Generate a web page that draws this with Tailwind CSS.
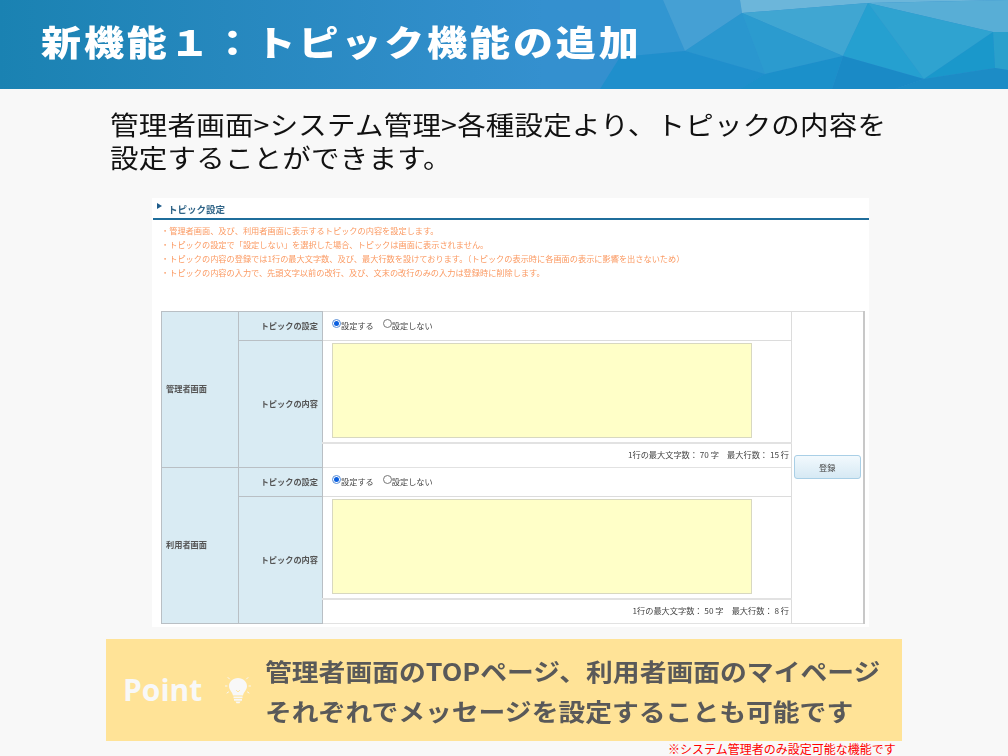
<!DOCTYPE html>
<html lang="ja">
<head>
  <meta charset="UTF-8" />
  <script src="https://cdn.jsdelivr.net/npm/@tailwindcss/browser@4"></script>
  <title>新機能1</title>
</head>
<body class="bg-[#f8f8f8] font-['Noto_Sans_CJK_JP','Noto_Sans',sans-serif]">
  <div class="w-[1008px] h-[756px] overflow-hidden flex flex-col">
    <!-- Header -->
    <header class="relative h-[89px] shrink-0 bg-gradient-to-r from-[#1a82b2] to-[#3490cf] to-[54%] pl-[41px] pt-[14px]">
      <svg class="absolute inset-0" width="1008" height="89" viewBox="0 0 1008 89" aria-hidden="true">
        <polygon points="620,0 663,0 685,51 620,57" fill="#3196d1"/>
        <polygon points="663,0 740,0 742,13 685,51" fill="#45a0d4"/>
        <polygon points="740,0 1008,0 868,3 742,13" fill="#6cb6da"/>
        <polygon points="868,3 1008,0 1008,32 993,32" fill="#58aed6"/>
        <polygon points="742,13 868,3 843,56" fill="#40a6d2"/>
        <polygon points="742,13 685,51 765,74" fill="#2a97cf"/>
        <polygon points="742,13 765,74 843,56" fill="#2b9bcf"/>
        <polygon points="868,3 843,56 924,79" fill="#25a0d0"/>
        <polygon points="868,3 993,32 924,79" fill="#2fa3d0"/>
        <polygon points="993,32 1008,32 1008,70 995,68" fill="#2aa0cc"/>
        <polygon points="993,32 995,68 924,79" fill="#1a98cb"/>
        <polygon points="620,57 685,51 765,74 740,89 600,89" fill="#1f8fcc"/>
        <polygon points="765,74 843,56 832,89 740,89" fill="#1b90ca"/>
        <polygon points="843,56 924,79 895,89 832,89" fill="#1a8ac6"/>
        <polygon points="924,79 995,68 1008,70 1008,89 895,89" fill="#1c8cc6"/>
      </svg>
      <h1 class="relative text-[40px] leading-[54px] font-black text-white tracking-[2.9px] scale-y-[0.88] origin-center">新機能１：トピック機能の追加</h1>
    </header>

    <div class="pl-[110px] pt-[19px] h-[109px] shrink-0">
      <p class="text-[28.5px] leading-[36.6px] tracking-[0.22px] text-[#111] scale-y-[0.9] origin-top-left">管理者画面&gt;システム管理&gt;各種設定より、トピックの内容を<br>設定することができます。</p>
    </div>

    <!-- Embedded admin screenshot -->
    <section class="ml-[152px] w-[717px] h-[429px] shrink-0 bg-white pt-[1px] text-[8.2px] leading-[14px] text-[#444] blur-[0.25px]">
      <div class="flex items-center h-[21px] ml-[1px] border-b-2 border-[#1f6d9b] text-[9.5px] font-bold text-[#2f6487]">
        <span class="ml-[4px] mr-[6px] w-0 h-0 border-y-[3px] border-y-transparent border-l-[5px] border-l-[#1f5c8a] -mt-[5px]"></span>
        <span>トピック設定</span>
      </div>
      <ul class="mt-[3px] ml-[9px] text-[#fb9a63] h-[88px]">
        <li>・管理者画面、及び、利用者画面に表示するトピックの内容を設定します。</li>
        <li>・トピックの設定で「設定しない」を選択した場合、トピックは画面に表示されません。</li>
        <li>・トピックの内容の登録では1行の最大文字数、及び、最大行数を設けております。（トピックの表示時に各画面の表示に影響を出さないため）</li>
        <li>・トピックの内容の入力で、先頭文字以前の改行、及び、文末の改行のみの入力は登録時に削除します。</li>
      </ul>
      <table class="ml-[9px] w-[702px] table-fixed border-collapse">
        <colgroup><col class="w-[77px]"><col class="w-[84px]"><col class="w-[469px]"><col class="w-[72px]"></colgroup>
        <tbody>
          <tr class="h-[29px]">
            <th rowspan="3" class="bg-[#d9ebf3] border border-[#b9bfc4] text-left font-bold text-[#555] pl-[4px] pb-[3px]">管理者画面</th>
            <th class="bg-[#d9ebf3] border border-[#b9bfc4] text-right font-bold text-[#555] pr-[4px] pb-[3px]">トピックの設定</th>
            <td class="border border-[#dcdcdc] pl-[9px] pb-[3px]">
              <div class="flex items-center">
                <span class="-mt-[3px] w-[9px] h-[9px] rounded-full border border-[#5a8fd8] bg-white flex items-center justify-center"><span class="w-[5px] h-[5px] rounded-full bg-[#0a5fe0]"></span></span><span>設定する</span>
                <span class="-mt-[3px] ml-[9px] w-[9px] h-[9px] rounded-full border border-[#777] bg-white"></span><span>設定しない</span>
              </div>
            </td>
            <td rowspan="6" class="border border-[#dcdcdc] border-r-2 border-r-[#c8c8c8] px-[2px] pb-[2px] align-middle">
              <div class="h-[24px] rounded-[3px] border border-[#a9cfe6] bg-gradient-to-b from-[#f2f9fd] to-[#d6e9f4] flex items-center justify-center">登録</div>
            </td>
          </tr>
          <tr class="h-[102px]">
            <th rowspan="2" class="bg-[#d9ebf3] border border-[#b9bfc4] text-right font-bold text-[#555] pr-[4px] pb-[3px]">トピックの内容</th>
            <td class="border border-[#dcdcdc] pl-[9px] pb-[2px]"><div class="w-[420px] h-[95px] bg-[#ffffc8] border border-[#d8d8c0]"></div></td>
          </tr>
          <tr class="h-[25px]">
            <td class="border-t-2 border-b border-x border-[#e2e2e2] text-right pr-[2px] pb-[2px]">1行の最大文字数： 70 字　最大行数： 15 行</td>
          </tr>
          <tr class="h-[29px]">
            <th rowspan="3" class="bg-[#d9ebf3] border border-[#b9bfc4] text-left font-bold text-[#555] pl-[4px] pb-[3px]">利用者画面</th>
            <th class="bg-[#d9ebf3] border border-[#b9bfc4] text-right font-bold text-[#555] pr-[4px] pb-[3px]">トピックの設定</th>
            <td class="border border-[#dcdcdc] pl-[9px] pb-[3px]">
              <div class="flex items-center">
                <span class="-mt-[3px] w-[9px] h-[9px] rounded-full border border-[#5a8fd8] bg-white flex items-center justify-center"><span class="w-[5px] h-[5px] rounded-full bg-[#0a5fe0]"></span></span><span>設定する</span>
                <span class="-mt-[3px] ml-[9px] w-[9px] h-[9px] rounded-full border border-[#777] bg-white"></span><span>設定しない</span>
              </div>
            </td>
          </tr>
          <tr class="h-[102px]">
            <th rowspan="2" class="bg-[#d9ebf3] border border-[#b9bfc4] text-right font-bold text-[#555] pr-[4px] pb-[3px]">トピックの内容</th>
            <td class="border border-[#dcdcdc] pl-[9px] pb-[2px]"><div class="w-[420px] h-[95px] bg-[#ffffc8] border border-[#d8d8c0]"></div></td>
          </tr>
          <tr class="h-[25px]">
            <td class="border-t-2 border-b border-x border-[#e2e2e2] text-right pr-[2px] pb-[3px]">1行の最大文字数： 50 字　最大行数： 8 行</td>
          </tr>
        </tbody>
      </table>
    </section>

    <!-- Point box -->
    <section class="ml-[106px] mt-[12px] w-[796px] h-[102px] shrink-0 bg-[#ffe397] flex items-center">
      <span class="ml-[17px] w-[84px] text-[30px] font-bold text-[#f8f8f8] font-['Open_Sans',sans-serif] leading-none">Point</span>
      <svg class="ml-[18px]" width="26" height="28" viewBox="0 0 26 28" aria-hidden="true">
        <g stroke="#f8f8f8" stroke-width="1" stroke-linecap="round">
          <path d="M3 1.500l1.500 1.500M23 1.500L21.500 3M0.500 10h1.500M25.500 10h-1.500M2 17l1.500-1M24 17l-1.500-1"/>
        </g>
        <path fill="#f8f8f8" d="M13 2c-5.200 0-9 3.700-9 8.300 0 3.800 3.300 5.500 4 9.200h10c.7-3.700 4-5.400 4-9.200C22 5.700 18.200 2 13 2z"/>
        <path fill="none" stroke="#ffe397" stroke-width="0.8" d="M11 14l2 2 2-2"/>
        <path fill="#f8f8f8" d="M8.500 20.500h9v1.700h-9zM9 23h8v1.700H9zM10.500 25.500h5l-1 1.700h-3z"/>
      </svg>
      <div class="ml-[14px] mt-[2px] text-[26.8px] leading-[44.4px] font-bold text-[#595959] whitespace-nowrap scale-y-[0.9] origin-center">
        <p>管理者画面のTOPページ、利用者画面のマイページ</p>
        <p>それぞれでメッセージを設定することも可能です</p>
      </div>
    </section>
    <p class="pl-[668px] text-[12px] leading-[15px] text-[#f00] whitespace-nowrap">※システム管理者のみ設定可能な機能です</p>
  </div>
</body>
</html>
